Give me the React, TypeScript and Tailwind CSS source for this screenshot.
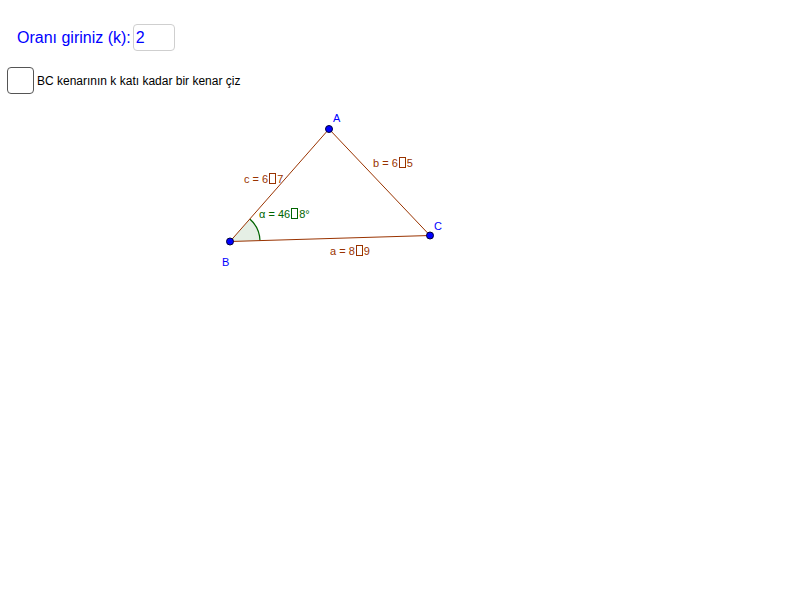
import React from "react";

const font = "font-['Liberation_Sans',Arial,sans-serif]";

function Tofu({ color }: { color: string }) {
  return (
    <span
      className="mx-[1px] inline-block h-[11px] w-[7px] border align-[-1px]"
      style={{ borderColor: color }}
    />
  );
}

function Val({ pre, post, color, x, y }: { pre: string; post: string; color: string; x: number; y: number }) {
  return (
    <div
      className="absolute whitespace-pre text-[11px] leading-[13px]"
      style={{ left: x, top: y, color }}
    >
      {pre}
      <Tofu color={color} />
      {post}
    </div>
  );
}

export default function App() {
  const A = { x: 329, y: 129 };
  const B = { x: 230, y: 241.5 };
  const C = { x: 430, y: 235.5 };
  const r = 30;
  const angBC = Math.atan2(C.y - B.y, C.x - B.x);
  const angBA = Math.atan2(A.y - B.y, A.x - B.x);
  const p1 = { x: B.x + r * Math.cos(angBC), y: B.y + r * Math.sin(angBC) };
  const p2 = { x: B.x + r * Math.cos(angBA), y: B.y + r * Math.sin(angBA) };
  const brown = "#993300";
  const green = "#006400";

  return (
    <div className={`relative h-[596px] w-[800px] overflow-hidden bg-white ${font}`}>
      {/* drawing pad */}
      <svg className="absolute inset-0" width={800} height={596}>
        <path
          d={`M ${B.x} ${B.y} L ${p1.x} ${p1.y} A ${r} ${r} 0 0 0 ${p2.x} ${p2.y} Z`}
          fill="#006400"
          fillOpacity={0.1}
          stroke="none"
        />
        <path
          d={`M ${p1.x} ${p1.y} A ${r} ${r} 0 0 0 ${p2.x} ${p2.y}`}
          fill="none"
          stroke={green}
          strokeWidth={1.2}
        />
        <line x1={A.x} y1={A.y} x2={B.x} y2={B.y} stroke={brown} strokeWidth={1} />
        <line x1={A.x} y1={A.y} x2={C.x} y2={C.y} stroke={brown} strokeWidth={1} />
        <line x1={B.x} y1={B.y} x2={C.x} y2={C.y} stroke={brown} strokeWidth={1} />
        {[A, B, C].map((p, i) => (
          <circle key={i} cx={p.x} cy={p.y} r={3.5} fill="#0000ff" stroke="#00003a" strokeWidth={1} />
        ))}
      </svg>

      <div className="relative flex flex-col">
        <div className="ml-[17px] mt-[24px] flex items-center gap-[2px]">
          <span className="text-[16px] text-[#0000ff]">Oranı giriniz (k):</span>
          <div className="flex h-[27px] w-[42px] items-center rounded-[4px] border border-[#cfcfcf] px-[2px] text-[16px] text-[#0000ff]">
            2
          </div>
        </div>
        <div className="ml-[7px] mt-[16px] flex items-center gap-[3px]">
          <div className="h-[27px] w-[27px] rounded-[4px] border border-[#555]" />
          <span className="text-[12px] text-black">BC kenarının k katı kadar bir kenar çiz</span>
        </div>
      </div>

      <div className="absolute left-[333px] top-[110px] text-[11px] text-[#0000ff]">A</div>
      <div className="absolute left-[222px] top-[254px] text-[11px] text-[#0000ff]">B</div>
      <div className="absolute left-[434px] top-[218px] text-[11px] text-[#0000ff]">C</div>

      <Val pre="c = 6" post="7" color={brown} x={244} y={173} />
      <Val pre="b = 6" post="5" color={brown} x={373} y={157} />
      <Val pre="a = 8" post="9" color={brown} x={330} y={245} />
      <Val pre="α = 46" post="8°" color={green} x={259} y={208} />
    </div>
  );
}
